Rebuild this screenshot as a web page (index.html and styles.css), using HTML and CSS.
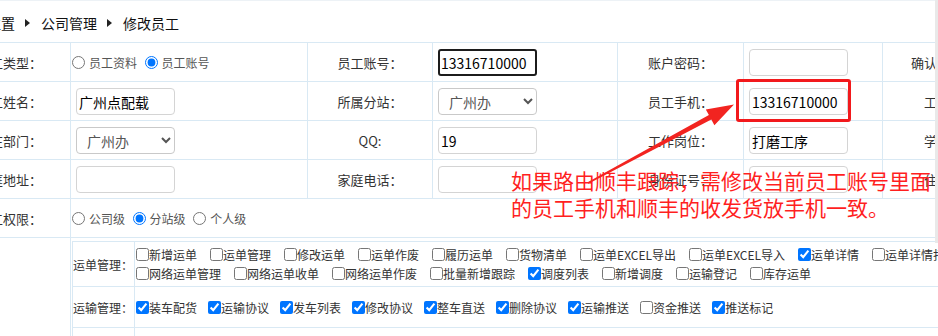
FILE: index.html
```html
<!DOCTYPE html>
<html lang="zh-CN">
<head>
  <meta charset="UTF-8" />
  <meta name="viewport" content="width=device-width, initial-scale=1.0" />
  <title>修改员工</title>
  <link rel="stylesheet" href="styles.css">
</head>
<body>
  <div class="page">
    <div class="crumbs">
      <span>当前位置</span><i class="caret"></i>
      <span>公司管理</span><i class="caret"></i>
      <span>修改员工</span>
    </div>

    <table class="form">
      <colgroup>
        <col class="c-label"><col class="c-wide">
        <col class="c-label2"><col class="c-mid">
        <col class="c-label3"><col class="c-narrow">
        <col class="c-label"><col class="c-rest">
      </colgroup>
      <tr>
        <th>员工类型：</th>
        <td class="opts">
          <label class="opt"><input type="radio" name="kind">员工资料</label>
          <label class="opt"><input type="radio" name="kind" checked>员工账号</label>
        </td>
        <th>员工账号：</th>
        <td><input class="txt focus" value="13316710000"></td>
        <th>账户密码：</th>
        <td><input class="txt" type="password"></td>
        <th>确认密码：</th>
        <td><input class="txt" type="password"></td>
      </tr>
      <tr>
        <th>员工姓名：</th>
        <td><input class="txt" value="广州点配载"></td>
        <th>所属分站：</th>
        <td><select class="pick"><option>广州办</option></select></td>
        <th>员工手机：</th>
        <td><input class="txt" value="13316710000"></td>
        <th>工号：</th>
        <td><input class="txt"></td>
      </tr>
      <tr>
        <th>所在部门：</th>
        <td><select class="pick"><option>广州办</option></select></td>
        <th>QQ:</th>
        <td><input class="txt" value="19"></td>
        <th>工作岗位：</th>
        <td><input class="txt" value="打磨工序"></td>
        <th>学历：</th>
        <td><input class="txt"></td>
      </tr>
      <tr>
        <th>家庭地址：</th>
        <td><input class="txt"></td>
        <th>家庭电话：</th>
        <td><input class="txt"></td>
        <th>身份证号：</th>
        <td><input class="txt"></td>
        <th>住址：</th>
        <td><input class="txt"></td>
      </tr>
      <tr>
        <th>员工权限：</th>
        <td class="opts" colspan="7">
          <label class="opt"><input type="radio" name="level">公司级</label>
          <label class="opt"><input type="radio" name="level" checked>分站级</label>
          <label class="opt"><input type="radio" name="level">个人级</label>
        </td>
      </tr>
      <tr>
        <th class="blank"></th>
        <td class="perm" colspan="7">
          <table class="rights">
            <tr class="r1">
              <th>运单管理：</th>
              <td>
                <div class="line">
                  <label><input type="checkbox">新增运单</label>
                  <label><input type="checkbox">运单管理</label>
                  <label><input type="checkbox">修改运单</label>
                  <label><input type="checkbox">运单作废</label>
                  <label><input type="checkbox">履历运单</label>
                  <label><input type="checkbox">货物清单</label>
                  <label><input type="checkbox">运单EXCEL导出</label>
                  <label><input type="checkbox">运单EXCEL导入</label>
                  <label><input type="checkbox" checked>运单详情</label>
                  <label><input type="checkbox">运单详情打印</label>
                </div>
                <div class="line">
                  <label><input type="checkbox">网络运单管理</label>
                  <label><input type="checkbox">网络运单收单</label>
                  <label><input type="checkbox">网络运单作废</label>
                  <label><input type="checkbox">批量新增跟踪</label>
                  <label><input type="checkbox" checked>调度列表</label>
                  <label><input type="checkbox">新增调度</label>
                  <label><input type="checkbox">运输登记</label>
                  <label><input type="checkbox">库存运单</label>
                </div>
              </td>
            </tr>
            <tr class="r2">
              <th>运输管理：</th>
              <td>
                <div class="line">
                  <label><input type="checkbox" checked>装车配货</label>
                  <label><input type="checkbox" checked>运输协议</label>
                  <label><input type="checkbox" checked>发车列表</label>
                  <label><input type="checkbox" checked>修改协议</label>
                  <label><input type="checkbox" checked>整车直送</label>
                  <label><input type="checkbox" checked>删除协议</label>
                  <label><input type="checkbox" checked>运输推送</label>
                  <label><input type="checkbox">资金推送</label>
                  <label><input type="checkbox" checked>推送标记</label>
                </div>
              </td>
            </tr>
            <tr class="r2">
              <th>财务管理：</th>
              <td>
                <div class="line">
                  <label><input type="checkbox">收款登记</label>
                  <label><input type="checkbox">付款登记</label>
                </div>
              </td>
            </tr>
          </table>
        </td>
      </tr>
    </table>
  </div>

  <!-- annotation drawn over the screenshot -->
  <div class="mark"></div>
  <svg class="arrow" width="938" height="336" viewBox="0 0 938 336">
    <polygon points="587.6,182.3 708.9,115.1 705.8,109.4 734,104.5 714.4,125.2 711.3,119.5 588.4,183.7" fill="#f22420"/>
  </svg>
  <div class="note">如果路由顺丰跟踪，需修改当前员工账号里面<br>的员工手机和顺丰的收发货放手机一致。</div>
  <div class="scroll-edge"></div>
</body>
</html>
```

FILE: styles.css
```css
body {
  margin: 0;
  font-family: "Noto Sans CJK SC", "Microsoft YaHei", sans-serif;
  color: #333;
  background: #fff;
  overflow: hidden;
  position: relative;
  height: 336px;
}

.page {
  margin-left: -52px;
  border-top: 1px solid #edf2f6;
}

.crumbs {
  height: 41px;
  display: flex;
  align-items: center;
  padding-left: 11px;
  padding-top: 2px;
  box-sizing: border-box;
  font-size: 14px;
  color: #111;
}

.caret {
  width: 0;
  height: 0;
  border-left: 5px solid #222;
  border-top: 4.5px solid transparent;
  border-bottom: 4.5px solid transparent;
  margin: 0 11px 0 10px;
}

.form {
  border-collapse: collapse;
  table-layout: fixed;
  width: 1256px;
}

.c-label { width: 122px; }
.c-wide { width: 237px; }
.c-label2 { width: 125px; }
.c-mid { width: 185px; }
.c-label3 { width: 126px; }
.c-narrow { width: 139px; }
.c-rest { width: 200px; }

.form > tbody > tr > th,
.form > tbody > tr > td {
  border: 1px solid #d9e9f4;
  height: 38px;
  padding: 0 5px;
}

.form th {
  font-weight: normal;
  font-size: 13px;
  text-align: center;
  color: #333;
}

.txt {
  width: 99px;
  height: 27px;
  box-sizing: border-box;
  border: 1px solid #d4d4d4;
  border-radius: 4px;
  padding: 1px 2px;
  font: 14px "Noto Sans CJK SC", sans-serif;
  color: #000;
  vertical-align: middle;
  outline: none;
}

.txt.focus {
  border: 2px solid #1c1c1c;
  border-radius: 3px;
  padding: 0 1px;
}

.pick {
  width: 99px;
  height: 27px;
  border: 1px solid #c9c9c9;
  border-radius: 4px;
  padding-left: 6px;
  font: 14px "Noto Sans CJK SC", sans-serif;
  color: #555;
  background: #fff;
  vertical-align: middle;
}

.form td.opts { padding-left: 0; }

.opt {
  display: inline-flex;
  align-items: center;
  font-size: 12px;
  color: #555;
  margin-right: 3px;
}

.opt input {
  margin: 0 4px 0 1px;
  width: 13px;
  height: 13px;
}

.form td.perm {
  padding: 3px 0 0 1px;
  vertical-align: top;
  height: auto;
}

.form th.blank { height: auto; }

.rights {
  border-collapse: collapse;
  width: 1300px;
}

.rights th,
.rights td {
  border: 1px solid #d9e9f4;
  padding: 0;
}

.rights th {
  width: 61px;
  font-size: 12px;
  text-align: left;
  white-space: nowrap;
}

.rights tr.r1 td {
  height: 45px;
  vertical-align: top;
  padding-top: 3px;
  box-sizing: border-box;
}

.rights tr.r2 td { height: 40px; }

.line {
  display: flex;
  align-items: center;
  height: 19px;
  white-space: nowrap;
  font-size: 12px;
  color: #333;
}

.line label {
  display: flex;
  align-items: center;
  margin-right: 12px;
}

.r2 .line label { margin-right: 10px; }

.line input {
  margin: 0 0 0 1px;
  width: 13px;
  height: 13px;
}

.mark {
  position: absolute;
  left: 736px;
  top: 79px;
  width: 115px;
  height: 43px;
  box-sizing: border-box;
  border: 3px solid #f2191c;
  border-radius: 3px;
}

.arrow {
  position: absolute;
  left: 0;
  top: 0;
  pointer-events: none;
}

.note {
  position: absolute;
  left: 511px;
  top: 167px;
  font-size: 21px;
  line-height: 27px;
  color: #ff1f1f;
  white-space: nowrap;
}

.scroll-edge {
  position: absolute;
  right: 0;
  top: 0;
  width: 3px;
  height: 243px;
  background: #e9e9e9;
}
```
